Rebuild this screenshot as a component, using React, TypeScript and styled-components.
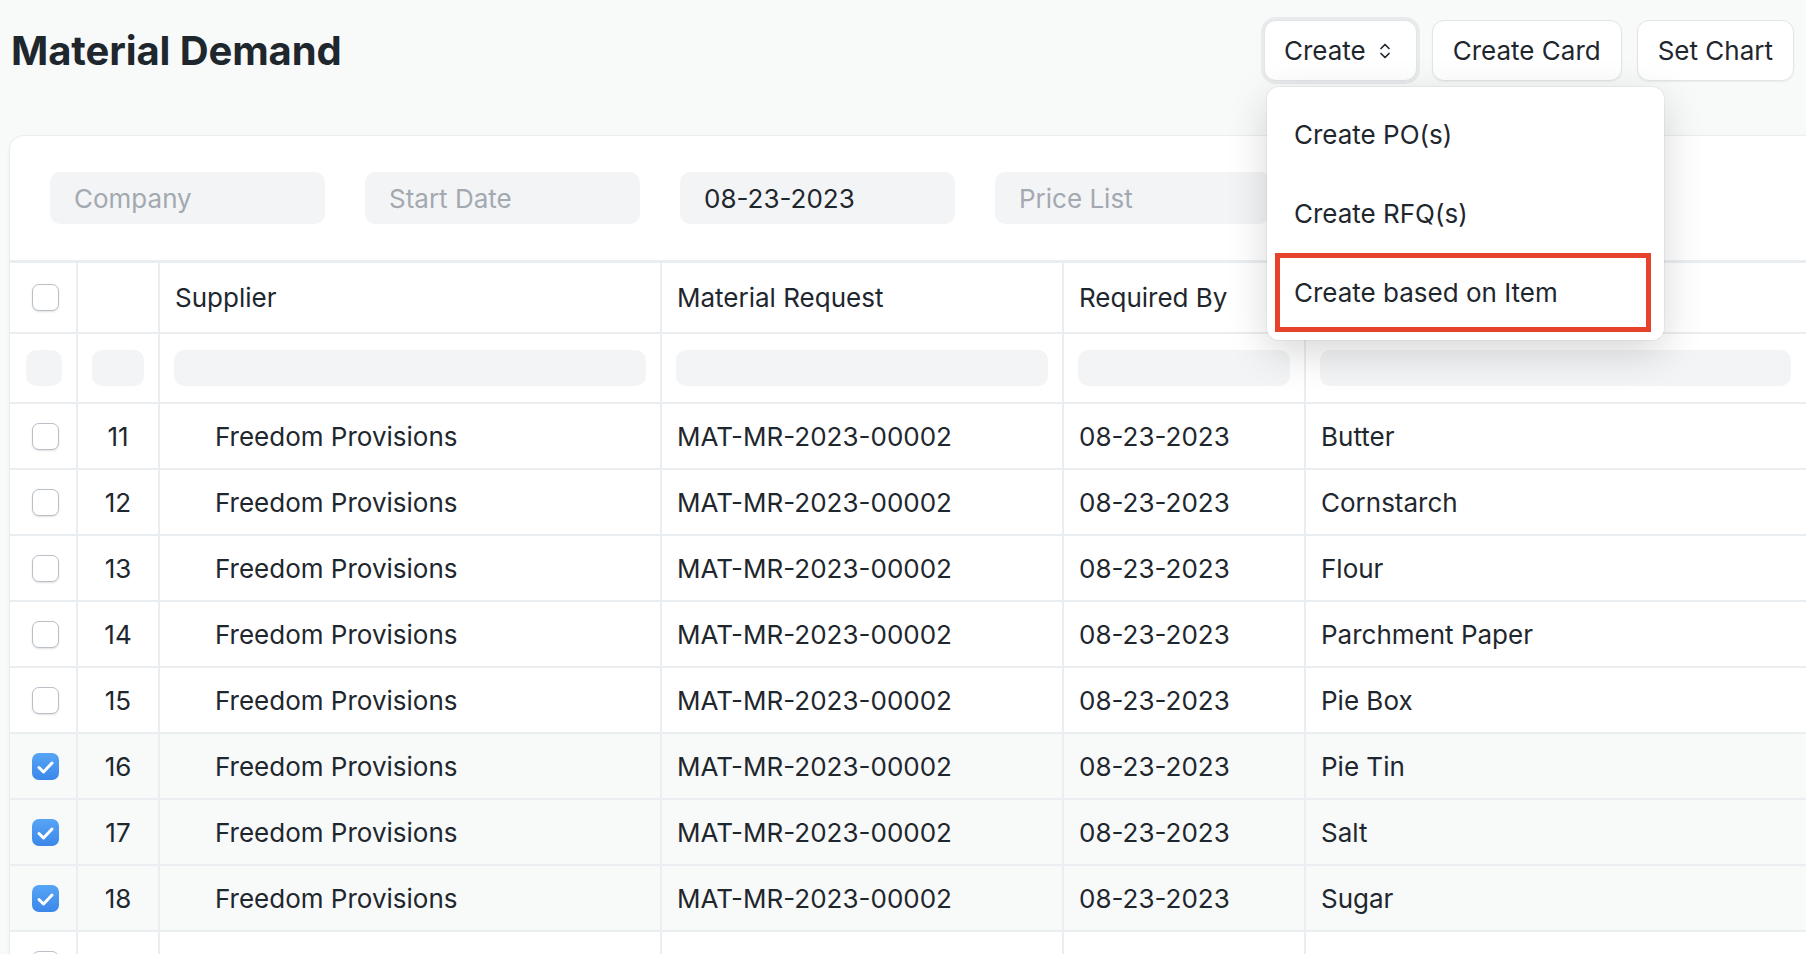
import React from 'react';
import styled, { createGlobalStyle } from 'styled-components';

const GlobalStyle = createGlobalStyle`
  html, body { margin: 0; padding: 0; background: #f8f9f9; }
  body { font-family: Inter, "Noto Sans", sans-serif; color: #1f272e; overflow: hidden; }
  *, *::before, *::after { box-sizing: border-box; }
`;

const Page = styled.div`
  width: 1806px;
  height: 954px;
  overflow: hidden;
  background: #f8f9f9;
`;

const Header = styled.header`
  display: flex;
  align-items: center;
  justify-content: space-between;
  height: 81px;
  padding: 20px 12px 0 11px;
`;

const Title = styled.h1`
  margin: 0;
  font-size: 40px;
  line-height: 1;
  font-weight: 700;
  color: #1f272e;
  letter-spacing: -0.1px;
`;

const Actions = styled.div`
  position: relative;
  display: flex;
  gap: 15px;
`;

const Button = styled.button<{ $active?: boolean }>`
  display: flex;
  align-items: center;
  gap: 13px;
  height: 61px;
  padding: ${(p) => (p.$active ? '0 25px 0 19px' : '0 20px')};
  font-family: inherit;
  font-size: 26px;
  color: #1f272e;
  background: #ffffff;
  border: 1px solid #e2e5e8;
  border-radius: 12px;
  box-shadow: ${(p) =>
    p.$active
      ? '0 0 0 3px #e8eaec, 0 1px 2px rgba(0,0,0,0.05)'
      : '0 1px 2px rgba(0,0,0,0.06)'};
  cursor: pointer;
`;

const Menu = styled.div`
  position: absolute;
  top: calc(100% + 6px);
  left: 3px;
  width: 397px;
  padding: 8px 13px 8px 8px;
  background: #ffffff;
  border-radius: 12px;
  box-shadow: 0 0 0 1px rgba(0, 0, 0, 0.04), 0 12px 40px rgba(0, 0, 0, 0.16);
  z-index: 10;
`;

const MenuItem = styled.div<{ $marked?: boolean }>`
  display: flex;
  align-items: center;
  height: 79px;
  padding-left: 19px;
  font-size: 26px;
  color: #1f272e;
  box-shadow: ${(p) => (p.$marked ? 'inset 0 0 0 5px #e6422c' : 'none')};
`;

const Card = styled.section`
  margin: 55px 0 0 10px;
  width: 1900px;
  background: #ffffff;
  border-radius: 14px 14px 0 0;
  box-shadow: 0 0 0 1px rgba(0, 0, 0, 0.035), 0 1px 5px rgba(0, 0, 0, 0.05);
`;

const Filters = styled.div`
  display: flex;
  gap: 40px;
  padding: 36px 40px;
`;

const FilterInput = styled.div<{ $filled?: boolean }>`
  display: flex;
  align-items: center;
  width: 275px;
  height: 52px;
  padding-left: 24px;
  background: #f3f4f5;
  border-radius: 10px;
  font-size: 26px;
  color: ${(p) => (p.$filled ? '#1f272e' : '#a3a9b0')};
`;

const Table = styled.div`
  border-top: 3px solid #ebeef0;
`;

const Row = styled.div<{ $h: number; $selected?: boolean }>`
  display: grid;
  grid-template-columns: 68px 82px 502px 402px 242px 1fr;
  height: ${(p) => p.$h}px;
  border-bottom: 2px solid #ebeef0;
  background: ${(p) => (p.$selected ? '#f8f9f9' : '#ffffff')};
`;

const Cell = styled.div<{ $indent?: number; $center?: boolean }>`
  display: flex;
  align-items: center;
  justify-content: ${(p) => (p.$center ? 'center' : 'flex-start')};
  padding: 0 15px 0 ${(p) => 15 + (p.$indent ?? 0)}px;
  border-right: 2px solid #ebeef0;
  font-size: 26px;
  color: #1f272e;
  white-space: nowrap;
  overflow: hidden;
  &:last-child { border-right: none; }
`;

const CheckCell = styled(Cell)`
  justify-content: center;
  padding: 0 0 0 5px;
`;

const FilterCell = styled.div<{ $first?: boolean }>`
  display: flex;
  align-items: center;
  padding: 0 14px 0 ${(p) => (p.$first ? 16 : 14)}px;
  border-right: 2px solid #ebeef0;
  &:last-child { border-right: none; padding-right: 0; }
`;

const FilterBox = styled.div`
  width: 100%;
  height: 36px;
  background: #f3f4f5;
  border-radius: 10px;
`;

const LastFilterBox = styled(FilterBox)`
  width: 471px;
`;

const Box = styled.span<{ $checked?: boolean }>`
  display: inline-flex;
  align-items: center;
  justify-content: center;
  width: 27px;
  height: 27px;
  border-radius: 7px;
  border: ${(p) => (p.$checked ? 'none' : '1.5px solid #b8bfc6')};
  background: ${(p) =>
    p.$checked ? 'linear-gradient(180deg, #57a5f6 0%, #3b87ea 100%)' : '#ffffff'};
  box-shadow: ${(p) => (p.$checked ? 'none' : '0 1px 2px rgba(0,0,0,0.12)')};
`;

const Check = ({ checked }: { checked?: boolean }) => (
  <Box $checked={checked}>
    {checked && (
      <svg width="27" height="27" viewBox="0 0 27 27" fill="none">
        <path d="M7 14.5 L11.5 19 L20 10" stroke="#fff" strokeWidth="3" strokeLinecap="round" strokeLinejoin="round" />
      </svg>
    )}
  </Box>
);

const SelectIcon = () => (
  <svg width="12" height="22" viewBox="0 0 12 22" fill="none">
    <path d="M2 8.5 L6 4.5 L10 8.5" stroke="#1f272e" strokeWidth="1.7" strokeLinecap="round" strokeLinejoin="round" />
    <path d="M2 13.5 L6 17.5 L10 13.5" stroke="#1f272e" strokeWidth="1.7" strokeLinecap="round" strokeLinejoin="round" />
  </svg>
);

const rows = [
  { n: 11, item: 'Butter', checked: false },
  { n: 12, item: 'Cornstarch', checked: false },
  { n: 13, item: 'Flour', checked: false },
  { n: 14, item: 'Parchment Paper', checked: false },
  { n: 15, item: 'Pie Box', checked: false },
  { n: 16, item: 'Pie Tin', checked: true },
  { n: 17, item: 'Salt', checked: true },
  { n: 18, item: 'Sugar', checked: true },
];

export default function App() {
  return (
    <Page>
      <GlobalStyle />
      <Header>
        <Title>Material Demand</Title>
        <Actions>
          <Button $active>
            Create
            <SelectIcon />
          </Button>
          <Button>Create Card</Button>
          <Button>Set Chart</Button>
          <Menu>
            <MenuItem>Create PO(s)</MenuItem>
            <MenuItem>Create RFQ(s)</MenuItem>
            <MenuItem $marked>Create based on Item</MenuItem>
          </Menu>
        </Actions>
      </Header>
      <Card>
        <Filters>
          <FilterInput>Company</FilterInput>
          <FilterInput>Start Date</FilterInput>
          <FilterInput $filled>08-23-2023</FilterInput>
          <FilterInput>Price List</FilterInput>
        </Filters>
        <Table>
          <Row $h={71}>
            <CheckCell>
              <Check />
            </CheckCell>
            <Cell />
            <Cell>Supplier</Cell>
            <Cell>Material Request</Cell>
            <Cell>Required By</Cell>
            <Cell>Item</Cell>
          </Row>
          <Row $h={70}>
            <FilterCell $first>
              <FilterBox />
            </FilterCell>
            <FilterCell>
              <FilterBox />
            </FilterCell>
            <FilterCell>
              <FilterBox />
            </FilterCell>
            <FilterCell>
              <FilterBox />
            </FilterCell>
            <FilterCell>
              <FilterBox />
            </FilterCell>
            <FilterCell>
              <LastFilterBox />
            </FilterCell>
          </Row>
          {rows.map((r) => (
            <Row key={r.n} $h={66} $selected={r.checked}>
              <CheckCell>
                <Check checked={r.checked} />
              </CheckCell>
              <Cell $center>{r.n}</Cell>
              <Cell $indent={40}>Freedom Provisions</Cell>
              <Cell>MAT-MR-2023-00002</Cell>
              <Cell>08-23-2023</Cell>
              <Cell>{r.item}</Cell>
            </Row>
          ))}
          <Row $h={66}>
            <CheckCell>
              <Check />
            </CheckCell>
            <Cell />
            <Cell />
            <Cell />
            <Cell />
            <Cell />
          </Row>
        </Table>
      </Card>
    </Page>
  );
}
